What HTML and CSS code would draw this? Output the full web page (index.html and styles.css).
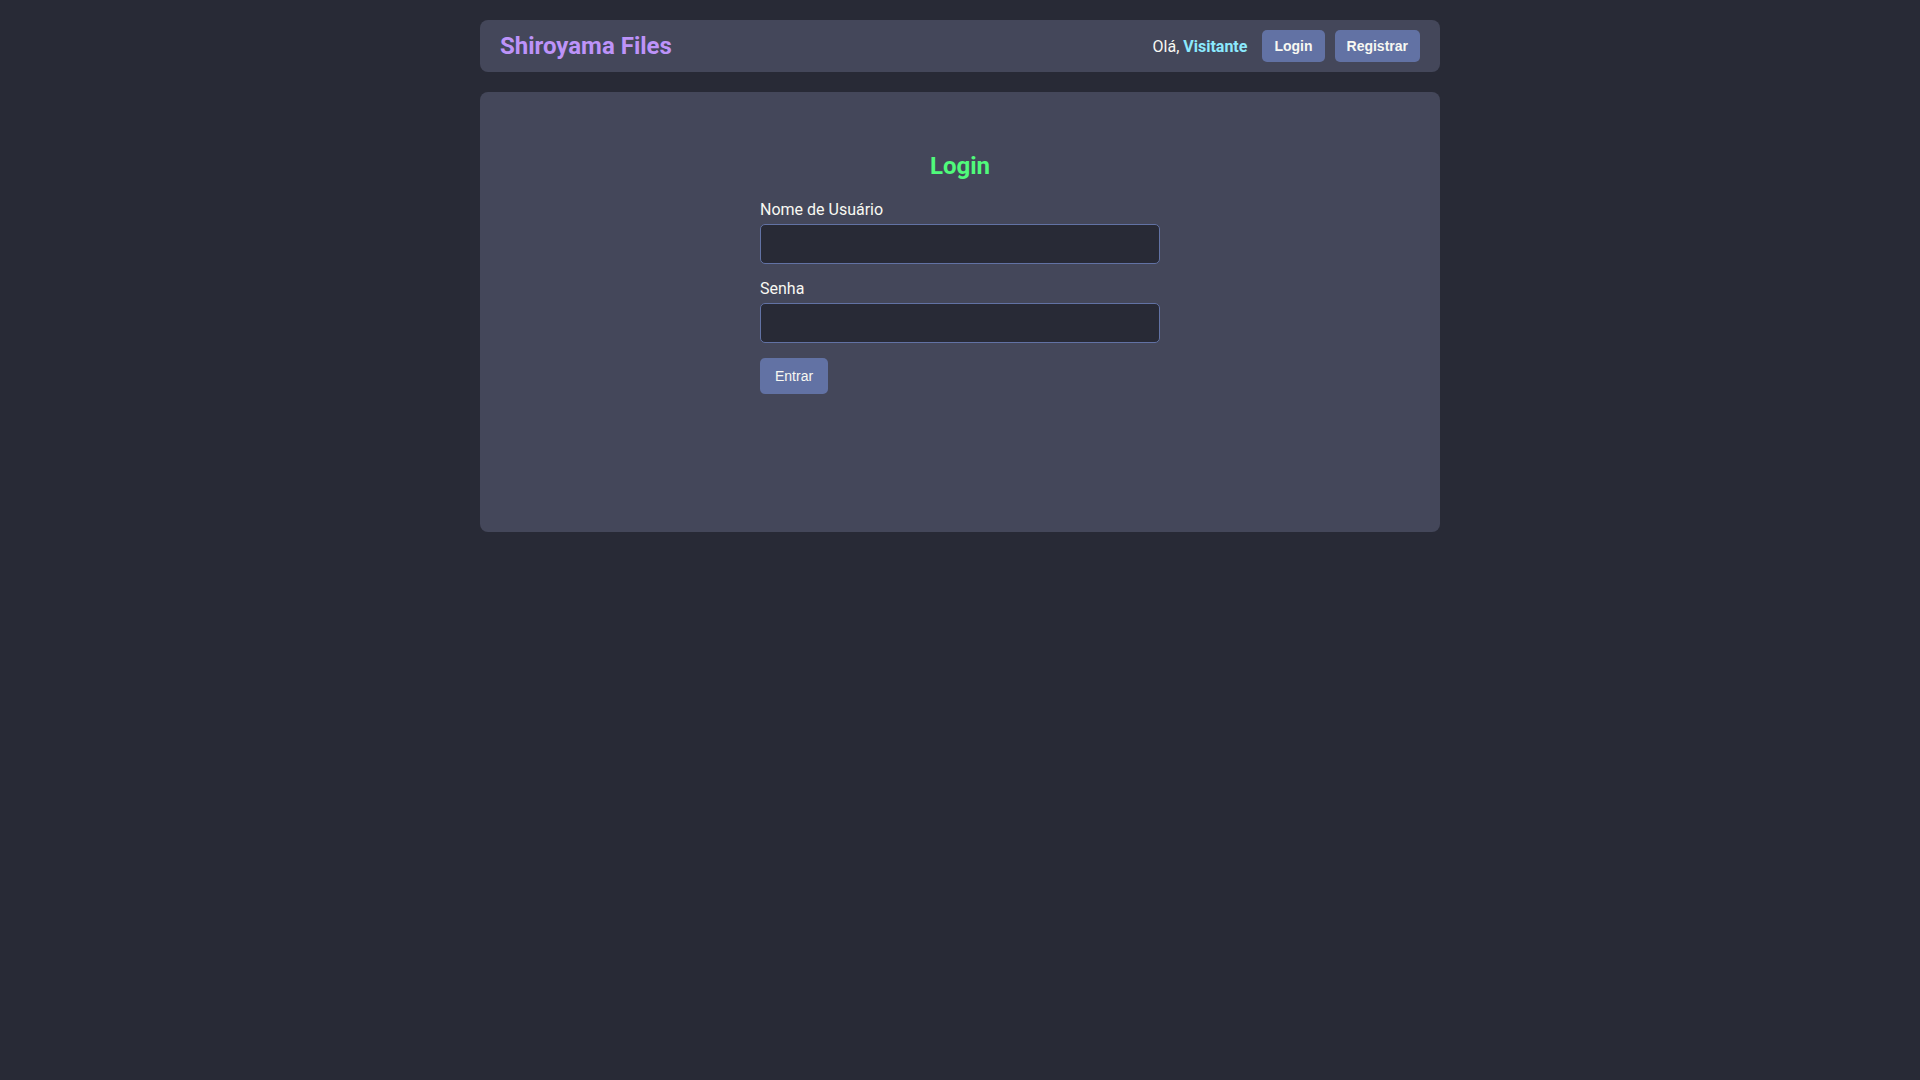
FILE: index.html
```html
<!DOCTYPE html>
<html lang="pt-BR">
<head>
    <meta charset="UTF-8">
    <meta name="viewport" content="width=device-width, initial-scale=1.0">
    <title>Shiroyama Files - Login</title>
    <link rel="stylesheet" href="styles.css">
</head>
<body>
    <div class="wrapper">
        <header class="topbar">
            <div class="brand">Shiroyama Files</div>
            <nav class="user-area">
                <span class="greeting">Olá, <strong class="username">Visitante</strong></span>
                <a href="#" class="btn">Login</a>
                <a href="#" class="btn">Registrar</a>
            </nav>
        </header>

        <main class="card">
            <div class="login-box">
                <h2>Login</h2>
                <form>
                    <div class="field">
                        <label for="username">Nome de Usuário</label>
                        <input type="text" id="username" name="username">
                    </div>
                    <div class="field">
                        <label for="password">Senha</label>
                        <input type="password" id="password" name="password">
                    </div>
                    <button type="submit" class="submit-btn">Entrar</button>
                </form>
            </div>
        </main>
    </div>
</body>
</html>
```

FILE: styles.css
```css
body {
    margin: 0;
    background-color: #282a36;
    color: #f8f8f2;
    font-family: Roboto, "Noto Sans", sans-serif;
    font-size: 16px;
}
.wrapper {
    max-width: 960px;
    margin: 0 auto;
    padding-top: 20px;
}
.topbar {
    display: flex;
    align-items: center;
    justify-content: space-between;
    background-color: #44475a;
    border-radius: 8px;
    padding: 10px 20px;
}
.brand {
    color: #bd93f9;
    font-size: 24px;
    font-weight: bold;
}
.user-area {
    display: flex;
    align-items: center;
    gap: 10px;
}
.greeting {
    margin-right: 5px;
}
.username {
    color: #8be9fd;
}
.btn {
    display: inline-block;
    background-color: #6272a4;
    color: #f8f8f2;
    font-family: "Liberation Sans", Arial, sans-serif;
    font-size: 14px;
    font-weight: bold;
    text-decoration: none;
    padding: 8px 12px;
    border-radius: 5px;
}
.card {
    margin-top: 20px;
    background-color: #44475a;
    border-radius: 8px;
    padding: 20px;
    min-height: 400px;
}
.login-box {
    width: 400px;
    margin: 40px auto 0;
}
.login-box h2 {
    color: #50fa7b;
    font-size: 24px;
    text-align: center;
    margin: 0 0 20px;
}
.field {
    margin-bottom: 15px;
}
.field label {
    display: block;
    margin-bottom: 5px;
}
.field input {
    display: block;
    box-sizing: border-box;
    width: 100%;
    height: 40px;
    padding: 10px;
    background-color: #282a36;
    color: #f8f8f2;
    border: 1px solid #6272a4;
    border-radius: 5px;
    font-size: 16px;
}
.submit-btn {
    background-color: #6272a4;
    color: #f8f8f2;
    font-family: "Liberation Sans", Arial, sans-serif;
    font-size: 14px;
    border: none;
    border-radius: 5px;
    padding: 10px 15px;
    cursor: pointer;
}
```
